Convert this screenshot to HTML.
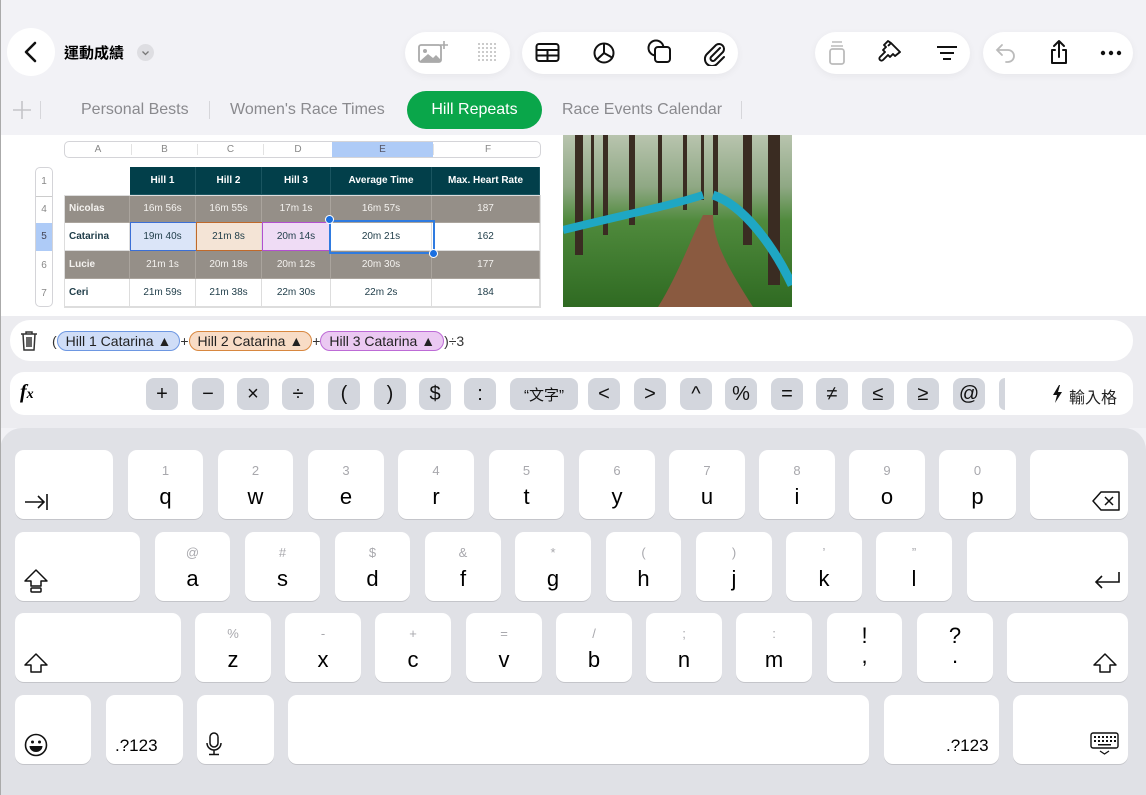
<!DOCTYPE html>
<html><head><meta charset="utf-8"><style>
*{box-sizing:border-box;margin:0;padding:0}
body{width:1146px;height:795px;overflow:hidden;background:#f2f2f6;font-family:"Liberation Sans","Noto Sans CJK TC",sans-serif;position:relative;color:#000}
.abs{position:absolute}
.pill{position:absolute;background:#fff;border-radius:22px;top:32px;height:42px;box-shadow:0 2px 8px rgba(0,0,0,.05)}
.tab{position:absolute;top:101px;font-size:16px;color:#8a8a8e}
.sep{position:absolute;top:101px;width:1px;height:18px;background:#d6d6da}
.cell{position:absolute;display:flex;align-items:center;justify-content:center;font-size:10px;border-right:1px solid #d8d8d8;border-bottom:1px solid #d8d8d8}
.key{position:absolute;background:#fff;border-radius:9px;display:flex;flex-direction:column;align-items:center;box-shadow:0 1px 0 rgba(0,0,0,.12)}
.key .n{font-size:13px;color:#a8a8ad;margin-top:13px;height:16px}
.key .l{font-size:22px;margin-top:5px}
.fk{position:absolute;top:378px;height:32px;width:32px;background:#d3d6dd;border-radius:8px;display:flex;align-items:center;justify-content:center;font-size:20px;color:#111}
.tok{display:inline-block;border-radius:10px;padding:0 8px;height:20px;line-height:19px;font-size:14px;color:#222;border:1px solid}
</style></head><body>

<!-- toolbar -->
<div class="abs" style="left:7px;top:28px;width:48px;height:48px;border-radius:24px;background:#fff"></div>
<svg class="abs" style="left:22px;top:40px" width="18" height="24"><path d="M13 3 L4 12 L13 21" stroke="#111" stroke-width="2.6" fill="none" stroke-linecap="round" stroke-linejoin="round"/></svg>
<div class="abs" style="left:64px;top:42px;font-size:15px;font-weight:bold">運動成績</div>
<div class="abs" style="left:137px;top:44px;width:17px;height:17px;border-radius:9px;background:#dedee2"></div>
<svg class="abs" style="left:137px;top:44px" width="17" height="17"><path d="M5.5 7.5 L8.5 10.5 L11.5 7.5" stroke="#777" stroke-width="1.3" fill="none"/></svg>

<div class="pill" style="left:405px;width:105px"></div>
<svg class="abs" style="left:418px;top:40px" width="32" height="26"><rect x="1" y="5" width="22" height="17" rx="2" fill="none" stroke="#aaa" stroke-width="1.8"/><circle cx="7" cy="11" r="2" fill="#aaa"/><path d="M2 21 L10 14 L15 18 L18 15 L23 20 L23 22 L2 22Z" fill="#aaa"/><path d="M26 1 V9 M22 5 H30" stroke="#aaa" stroke-width="1.6"/></svg>
<svg class="abs" style="left:477px;top:42px" width="20" height="20"><g fill="#bbb"><circle cx="2" cy="2" r="1"/><circle cx="6" cy="2" r="1"/><circle cx="10" cy="2" r="1"/><circle cx="14" cy="2" r="1"/><circle cx="18" cy="2" r="1"/><circle cx="2" cy="6" r="1"/><circle cx="6" cy="6" r="1"/><circle cx="10" cy="6" r="1"/><circle cx="14" cy="6" r="1"/><circle cx="18" cy="6" r="1"/><circle cx="2" cy="10" r="1"/><circle cx="6" cy="10" r="1"/><circle cx="10" cy="10" r="1"/><circle cx="14" cy="10" r="1"/><circle cx="18" cy="10" r="1"/><circle cx="2" cy="14" r="1"/><circle cx="6" cy="14" r="1"/><circle cx="10" cy="14" r="1"/><circle cx="14" cy="14" r="1"/><circle cx="18" cy="14" r="1"/><circle cx="2" cy="18" r="1"/><circle cx="6" cy="18" r="1"/><circle cx="10" cy="18" r="1"/><circle cx="14" cy="18" r="1"/><circle cx="18" cy="18" r="1"/></g></svg>

<div class="pill" style="left:522px;width:216px"></div>
<svg class="abs" style="left:535px;top:42px" width="26" height="22"><rect x="1.5" y="2" width="22" height="17" rx="2.5" fill="none" stroke="#111" stroke-width="2"/><path d="M1.5 8 H23.5 M1.5 13.5 H23.5 M12.5 8 V19" stroke="#111" stroke-width="2"/></svg>
<svg class="abs" style="left:592px;top:41px" width="24" height="24"><circle cx="12" cy="12" r="9.5" fill="none" stroke="#111" stroke-width="2"/><path d="M12 2.5 V12 L20 16.5 M12 12 L5 18.5" stroke="#111" stroke-width="2" fill="none"/></svg>
<svg class="abs" style="left:647px;top:39px" width="26" height="26"><circle cx="9" cy="9" r="7.5" fill="none" stroke="#111" stroke-width="2"/><rect x="8" y="8" width="15" height="15" rx="3" fill="#fff" stroke="#111" stroke-width="2"/></svg>
<svg class="abs" style="left:702px;top:40px" width="26" height="26"><path d="M18 8 L9 17 a2.5 2.5 0 0 0 3.5 3.5 L21 12 a5 5 0 0 0 -7 -7 L5 14 a7 7 0 0 0 10 10 L22 17" stroke="#111" stroke-width="2" fill="none" stroke-linecap="round"/></svg>

<div class="pill" style="left:815px;width:155px"></div>
<svg class="abs" style="left:827px;top:40px" width="20" height="26"><path d="M5 2 H15 M4 6 H16" stroke="#bbb" stroke-width="1.6"/><rect x="3" y="9" width="14" height="15" rx="2.5" fill="none" stroke="#bbb" stroke-width="1.8"/></svg>
<svg class="abs" style="left:878px;top:40px" width="26" height="26"><path d="M13 3 L22 12 L17 16 L15 14 L12 17 L10 15 L5 20 a2 2 0 0 1 -3 -3 L7 12 L5 10 L8 7 L6 5 L10 1Z M13 3 L10 6" stroke="#111" stroke-width="1.9" fill="none" stroke-linejoin="round"/></svg>
<svg class="abs" style="left:936px;top:45px" width="22" height="16"><path d="M1 2 H21 M4 8 H18 M7 14 H15" stroke="#111" stroke-width="2"/></svg>

<div class="pill" style="left:983px;width:150px"></div>
<svg class="abs" style="left:994px;top:42px" width="24" height="22"><path d="M8 3 L3 8 L8 13 M3 8 H14 a6 6 0 0 1 0 12 H12" stroke="#bbb" stroke-width="1.8" fill="none" stroke-linecap="round"/></svg>
<svg class="abs" style="left:1047px;top:38px" width="24" height="28"><path d="M12 19 V3 M7 8 L12 3 L17 8 M8 12 H5 V25 H19 V12 H16" stroke="#111" stroke-width="2" fill="none" stroke-linecap="round" stroke-linejoin="round"/></svg>
<svg class="abs" style="left:1100px;top:49px" width="24" height="8"><circle cx="3" cy="4" r="2.2" fill="#111"/><circle cx="11" cy="4" r="2.2" fill="#111"/><circle cx="19" cy="4" r="2.2" fill="#111"/></svg>

<!-- tabs -->
<svg class="abs" style="left:12px;top:100px" width="20" height="20"><path d="M10 1 V19 M1 10 H19" stroke="#c4c4c8" stroke-width="1.6"/></svg>
<div class="sep" style="left:40px"></div>
<div class="tab" style="left:81px">Personal Bests</div>
<div class="sep" style="left:209px"></div>
<div class="tab" style="left:230px">Women's Race Times</div>
<div class="abs" style="left:407px;top:91px;width:135px;height:38px;border-radius:19px;background:#0aa64a;color:#fff;font-size:16px;text-align:center;line-height:38px">Hill Repeats</div>
<div class="tab" style="left:562px">Race Events Calendar</div>
<div class="sep" style="left:741px"></div>

<!-- sheet area -->
<div class="abs" style="left:0;top:135px;width:1146px;height:185px;background:#fff"></div>
<div class="abs" style="left:64px;top:141px;width:477px;height:17px;border:1px solid #d4d4d8;border-radius:5px;background:#fff;overflow:hidden;font-size:10px;color:#888">
<div class="abs" style="left:0;width:66px;text-align:center;top:2px">A</div>
<div class="abs" style="left:66px;width:66px;text-align:center;top:2px;border-left:1px solid #e2e2e2">B</div>
<div class="abs" style="left:132px;width:66px;text-align:center;top:2px;border-left:1px solid #e2e2e2">C</div>
<div class="abs" style="left:198px;width:69px;text-align:center;top:2px;border-left:1px solid #e2e2e2">D</div>
<div class="abs" style="left:267px;width:101px;top:0;height:17px;line-height:15px;text-align:center;background:#aecbf7;color:#556">E</div>
<div class="abs" style="left:368px;width:109px;text-align:center;top:2px;border-left:1px solid #e2e2e2">F</div>
</div>
<div class="abs" style="left:35px;top:167px;width:18px;height:140px;border:1px solid #d4d4d8;border-radius:5px;background:#fff;font-size:10px;color:#888;overflow:hidden">
<div class="abs" style="top:8px;width:16px;text-align:center">1</div>
<div class="abs" style="top:28px;width:16px;height:1px;background:#ccc"></div>
<div class="abs" style="top:36px;width:16px;text-align:center">4</div>
<div class="abs" style="top:55px;width:16px;height:28px;background:#aecbf7;color:#445;text-align:center;line-height:28px">5</div>
<div class="abs" style="top:92px;width:16px;text-align:center">6</div>
<div class="abs" style="top:120px;width:16px;text-align:center">7</div>
</div>
<div class="abs" style="left:130px;top:167px;width:410px;height:28px;background:#023f4a"></div>
<div id="tbl"></div>
<div class="abs" style="left:64px;top:195px;width:477px;height:113px;border:1px solid #ddd"></div>
<script>
var cols=[64,130,196,262,331,432,540];
var rows=[[167,'',"Hill 1","Hill 2","Hill 3","Average Time","Max. Heart Rate"],
[195,"Nicolas","16m 56s","16m 55s","17m 1s","16m 57s","187"],
[223,"Catarina","19m 40s","21m 8s","20m 14s","20m 21s","162"],
[251,"Lucie","21m 1s","20m 18s","20m 12s","20m 30s","177"],
[279,"Ceri","21m 59s","21m 38s","22m 30s","22m 2s","184"]];
var h='';
rows.forEach(function(r,ri){
 for(var c=0;c<6;c++){
  if(ri==0&&c==0)continue;
  var bg='#fff',col='#1e3c48',fw='normal',bd='#ddd',jc='center',pl=0;
  if(ri==0){bg='#023f4a';col='#fff';fw='bold';bd='#1a5560'}
  else if(ri%2==1){bg='#958f88';col='#f4f2ef';bd='#aaa49d'}
  if(c==0&&ri>0){fw='bold';jc='flex-start';pl=5}
  if(ri==2&&c==1)bg='#dbe5f8';if(ri==2&&c==2)bg='#f4e4d6';if(ri==2&&c==3)bg='#efdcf5';
  h+='<div class="cell" style="left:'+cols[c]+'px;top:'+r[0]+'px;width:'+(cols[c+1]-cols[c])+'px;height:28px;background:'+bg+';color:'+col+';font-weight:'+fw+';border-color:'+bd+';justify-content:'+jc+';padding-left:'+pl+'px">'+r[c+1]+'</div>';
 }
});
document.getElementById('tbl').outerHTML=h;
</script>
<div class="abs" style="left:130px;top:222px;width:67px;height:29px;border:1.5px solid #3b6fd6"></div>
<div class="abs" style="left:196px;top:222px;width:67px;height:29px;border:1.5px solid #c0692a"></div>
<div class="abs" style="left:262px;top:222px;width:69px;height:29px;border:1.5px solid #b24fcf"></div>
<div class="abs" style="left:329px;top:220px;width:106px;height:34px;border:2.5px solid #2f7be0"></div>
<div class="abs" style="left:325px;top:215px;width:9px;height:9px;border-radius:5px;background:#1a6fe0;border:1.5px solid #fff"></div>
<div class="abs" style="left:429px;top:249px;width:9px;height:9px;border-radius:5px;background:#1a6fe0;border:1.5px solid #fff"></div>

<!-- photo -->
<svg class="abs" style="left:563px;top:135px" width="229" height="172">
<defs><linearGradient id="g" x1="0" y1="0" x2="0" y2="1"><stop offset="0" stop-color="#b8c4ae"/><stop offset=".3" stop-color="#8fa884"/><stop offset=".5" stop-color="#4f8a3c"/><stop offset="1" stop-color="#2f6a22"/></linearGradient></defs>
<rect width="229" height="172" fill="url(#g)"/>
<g fill="#3a2c22"><rect x="12" y="0" width="8" height="120"/><rect x="40" y="0" width="5" height="100"/><rect x="66" y="0" width="6" height="90"/><rect x="95" y="0" width="4" height="70"/><rect x="120" y="0" width="4" height="75"/><rect x="150" y="0" width="5" height="80"/><rect x="180" y="0" width="9" height="110"/><rect x="205" y="0" width="12" height="150"/><rect x="28" y="0" width="3" height="90"/><rect x="138" y="0" width="3" height="65"/></g>
<path d="M95 172 C115 140 125 110 140 80 L150 80 C150 110 170 140 190 172Z" fill="#8a5a40"/>
<path d="M0 95 C60 80 110 70 140 60" stroke="#1fa7c4" stroke-width="8" fill="none"/>
<path d="M150 60 C180 70 210 110 229 150" stroke="#1fa7c4" stroke-width="9" fill="none"/>
</svg>

<!-- formula area -->
<div class="abs" style="left:0;top:316px;width:1146px;height:112px;background:#ececf0"></div>
<div class="abs" style="left:10px;top:320px;width:1123px;height:41px;background:#fff;border-radius:20px"></div>
<svg class="abs" style="left:19px;top:330px" width="20" height="22"><path d="M2 4 H18 M7 4 V2 H13 V4 M4 4 L5 20 H15 L16 4 M8 7 V17 M10 7 V17 M12 7 V17" stroke="#333" stroke-width="1.5" fill="none"/></svg>
<div class="abs" style="left:52px;top:331px;font-size:14px;color:#333;white-space:nowrap">(<span class="tok" style="background:#cfddf7;border-color:#6d97e2">Hill 1 Catarina ▲</span>+<span class="tok" style="background:#f8dcc6;border-color:#d8873f">Hill 2 Catarina ▲</span>+<span class="tok" style="background:#ebc9f2;border-color:#bd6bd6">Hill 3 Catarina ▲</span>)÷3</div>

<div class="abs" style="left:10px;top:372px;width:1123px;height:43px;background:#fff;border-radius:14px"></div>
<div class="abs" style="left:20px;top:381px;font-size:20px;font-weight:bold;font-style:italic;font-family:'Liberation Serif',serif">f<span style="font-size:14px">x</span></div>
<div class="fk" style="left:146px">+</div><div class="fk" style="left:192px">−</div><div class="fk" style="left:237px">×</div><div class="fk" style="left:282px">÷</div><div class="fk" style="left:328px">(</div><div class="fk" style="left:374px">)</div><div class="fk" style="left:419px">$</div><div class="fk" style="left:464px">:</div>
<div class="fk" style="left:510px;width:68px;font-size:15px">“文字”</div>
<div class="fk" style="left:588px">&lt;</div><div class="fk" style="left:634px">&gt;</div><div class="fk" style="left:680px">^</div><div class="fk" style="left:725px">%</div><div class="fk" style="left:771px">=</div><div class="fk" style="left:816px">≠</div><div class="fk" style="left:862px">≤</div><div class="fk" style="left:907px">≥</div><div class="fk" style="left:953px">@</div><div class="fk" style="left:999px;width:6px;border-radius:8px 0 0 8px"></div>
<svg class="abs" style="left:1051px;top:384px" width="12" height="20"><path d="M8 1 L2 11 H6 L4 19 L11 8 H7 L9 1Z" fill="#111"/></svg>
<div class="abs" style="left:1069px;top:384px;font-size:16px;color:#222">輸入格</div>

<!-- keyboard -->
<div class="abs" style="left:0;top:428px;width:1146px;height:367px;background:#e0e1e6;border-radius:22px 22px 0 0"></div>
<div id="kb"></div>
<script>
var K=[
[450,[[15,113,'',''],[128,203,'1','q'],[218,293,'2','w'],[308,384,'3','e'],[398,474,'4','r'],[489,564,'5','t'],[579,655,'6','y'],[669,745,'7','u'],[759,835,'8','i'],[849,925,'9','o'],[939,1016,'0','p'],[1030,1128,'','']]],
[532,[[15,140,'',''],[155,230,'@','a'],[245,320,'#','s'],[335,410,'$','d'],[425,501,'&amp;','f'],[515,591,'*','g'],[606,681,'(','h'],[696,772,')','j'],[786,862,'’','k'],[876,952,'”','l'],[967,1128,'','']]],
[613,[[15,181,'',''],[195,271,'%','z'],[285,361,'-','x'],[375,451,'+','c'],[466,542,'=','v'],[556,632,'/','b'],[646,722,';','n'],[736,812,':','m'],[827,902,'!',','],[917,993,'?','.'],[1007,1128,'','']]],
[695,[[15,91,'',''],[106,183,'',''],[197,274,'',''],[288,869,'',''],[884,999,'',''],[1013,1128,'','']]]];
var s='';
K.forEach(function(r){r[1].forEach(function(k){
 var big=(k[2]=='!'||k[2]=='?');
 s+='<div class="key" style="left:'+k[0]+'px;top:'+r[0]+'px;width:'+(k[1]-k[0])+'px;height:69px">'+(k[3]?'<div class="n" style="'+(big?'font-size:22px;color:#000;margin-top:10px;height:22px':'')+'">'+k[2]+'</div><div class="l" style="'+(big?'margin-top:-2px':'')+'">'+k[3]+'</div>':'')+'</div>';
});});
document.getElementById('kb').outerHTML=s;
</script>
<svg class="abs" style="left:24px;top:492px" width="26" height="20"><path d="M1 10 H20 M14 4 L20 10 L14 16 M23 2 V18" stroke="#111" stroke-width="1.6" fill="none"/></svg>
<svg class="abs" style="left:1092px;top:490px" width="30" height="22"><path d="M9 2 H27 V20 H9 L1 11Z" stroke="#111" stroke-width="1.5" fill="none" stroke-linejoin="round"/><path d="M13 7 L21 15 M21 7 L13 15" stroke="#111" stroke-width="1.5"/></svg>
<svg class="abs" style="left:24px;top:568px" width="26" height="26"><path d="M12 2 L23 13 H17 V18 H7 V13 H1Z" stroke="#111" stroke-width="1.5" fill="none" stroke-linejoin="round"/><rect x="7" y="20" width="10" height="4" rx="1" stroke="#111" stroke-width="1.5" fill="none"/></svg>
<svg class="abs" style="left:1094px;top:571px" width="28" height="22"><path d="M25 1 V11 H2 M8 5 L2 11 L8 17" stroke="#111" stroke-width="1.6" fill="none"/></svg>
<svg class="abs" style="left:24px;top:652px" width="26" height="22"><path d="M12 2 L23 13 H17 V20 H7 V13 H1Z" stroke="#111" stroke-width="1.5" fill="none" stroke-linejoin="round"/></svg>
<svg class="abs" style="left:1093px;top:652px" width="26" height="22"><path d="M12 2 L23 13 H17 V20 H7 V13 H1Z" stroke="#111" stroke-width="1.5" fill="none" stroke-linejoin="round"/></svg>
<svg class="abs" style="left:24px;top:733px" width="24" height="24"><circle cx="12" cy="12" r="10.5" stroke="#111" stroke-width="1.6" fill="none"/><circle cx="8.5" cy="9" r="1.5" fill="#111"/><circle cx="15.5" cy="9" r="1.5" fill="#111"/><path d="M5.5 13 H18.5 a6.5 6 0 0 1 -13 0Z" fill="#111"/></svg>
<div class="abs" style="left:115px;top:736px;font-size:17px">.?123</div>
<svg class="abs" style="left:204px;top:731px" width="20" height="26"><rect x="6" y="2" width="8" height="14" rx="4" stroke="#111" stroke-width="1.5" fill="none"/><path d="M3 12 a7 7 0 0 0 14 0 M10 19 V23 M5 23.5 H15" stroke="#111" stroke-width="1.5" fill="none"/></svg>
<div class="abs" style="left:946px;top:736px;font-size:17px">.?123</div>
<svg class="abs" style="left:1090px;top:732px" width="30" height="24"><rect x="1" y="1" width="27" height="15" rx="2" stroke="#111" stroke-width="1.4" fill="none"/><g fill="#111"><rect x="4" y="4" width="2" height="2"/><rect x="8" y="4" width="2" height="2"/><rect x="12" y="4" width="2" height="2"/><rect x="16" y="4" width="2" height="2"/><rect x="20" y="4" width="2" height="2"/><rect x="24" y="4" width="2" height="2"/><rect x="4" y="8" width="2" height="2"/><rect x="8" y="8" width="2" height="2"/><rect x="12" y="8" width="2" height="2"/><rect x="16" y="8" width="2" height="2"/><rect x="20" y="8" width="2" height="2"/><rect x="24" y="8" width="2" height="2"/><rect x="8" y="12" width="13" height="1.5"/></g><path d="M10 19 L14.5 22 L19 19" stroke="#111" stroke-width="1.3" fill="none"/></svg>
<div class="abs" style="left:0;top:0;width:1px;height:795px;background:#aaa"></div>
</body></html>
